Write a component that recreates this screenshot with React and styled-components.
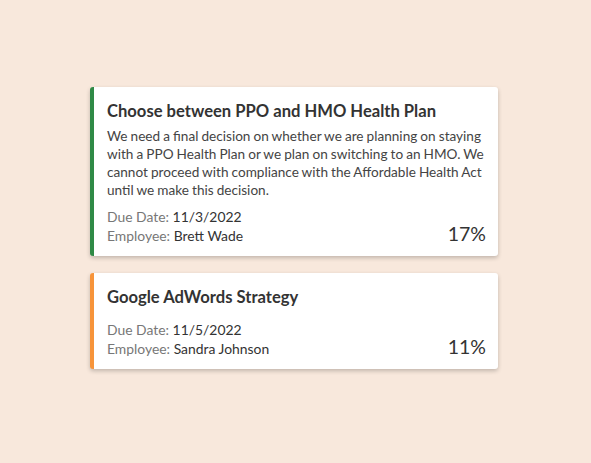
import React from 'react'
import styled, { createGlobalStyle } from 'styled-components'

const Global = createGlobalStyle`
  html, body { margin:0; padding:0; }
  body { background:#f8e8dc; font-family:Lato, "Noto Sans", sans-serif; }
`

const Page = styled.div`
  width:591px;
  height:463px;
  box-sizing:border-box;
  padding:87px 93px 0 90px;
  display:flex;
  flex-direction:column;
  gap:17px;
`

const Card = styled.div`
  background:#fff;
  border-left:4px solid ${p => p.accent};
  border-radius:3px;
  box-shadow:0 2px 4px rgba(0,0,0,0.22);
  padding:12px 12px 11px 13px;
  display:flex;
  flex-direction:column;
`

const Title = styled.h2`
  margin:0;
  font-size:16.6px;
  font-weight:700;
  color:#333;
  line-height:24px;
`

const Body = styled.p`
  margin:4px 0 0;
  font-size:13.6px;
  word-spacing:-0.4px;
  line-height:18px;
  color:#444;
`

const Footer = styled.div`
  display:flex;
  justify-content:space-between;
  align-items:flex-end;
  margin-top:${p => p.gap}px;
`

const Meta = styled.div`
  font-size:13.9px;
  line-height:18.5px;
  color:#333;
`

const Label = styled.span`
  color:#777;
`

const Percent = styled.div`
  font-size:19.5px;
  line-height:22px;
  color:#333;
`

const tasks = [
  {
    title:'Choose between PPO and HMO Health Plan',
    body:'We need a final decision on whether we are planning on staying with a PPO Health Plan or we plan on switching to an HMO. We cannot proceed with compliance with the Affordable Health Act until we make this decision.',
    due:'11/3/2022', employee:'Brett Wade', pct:'17%', accent:'#2f8a46'
  },
  {
    title:'Google AdWords Strategy',
    due:'11/5/2022', employee:'Sandra Johnson', pct:'11%', accent:'#f7943a'
  }
]

export default function App() {
  return (
    <>
      <Global />
      <Page>
        {tasks.map(t => (
          <Card key={t.title} accent={t.accent}>
            <Title>{t.title}</Title>
            {t.body && <Body>{t.body}</Body>}
            <Footer gap={t.body ? 9 : 12}>
              <Meta>
                <div><Label>Due Date: </Label>{t.due}</div>
                <div><Label>Employee: </Label>{t.employee}</div>
              </Meta>
              <Percent>{t.pct}</Percent>
            </Footer>
          </Card>
        ))}
      </Page>
    </>
  )
}
